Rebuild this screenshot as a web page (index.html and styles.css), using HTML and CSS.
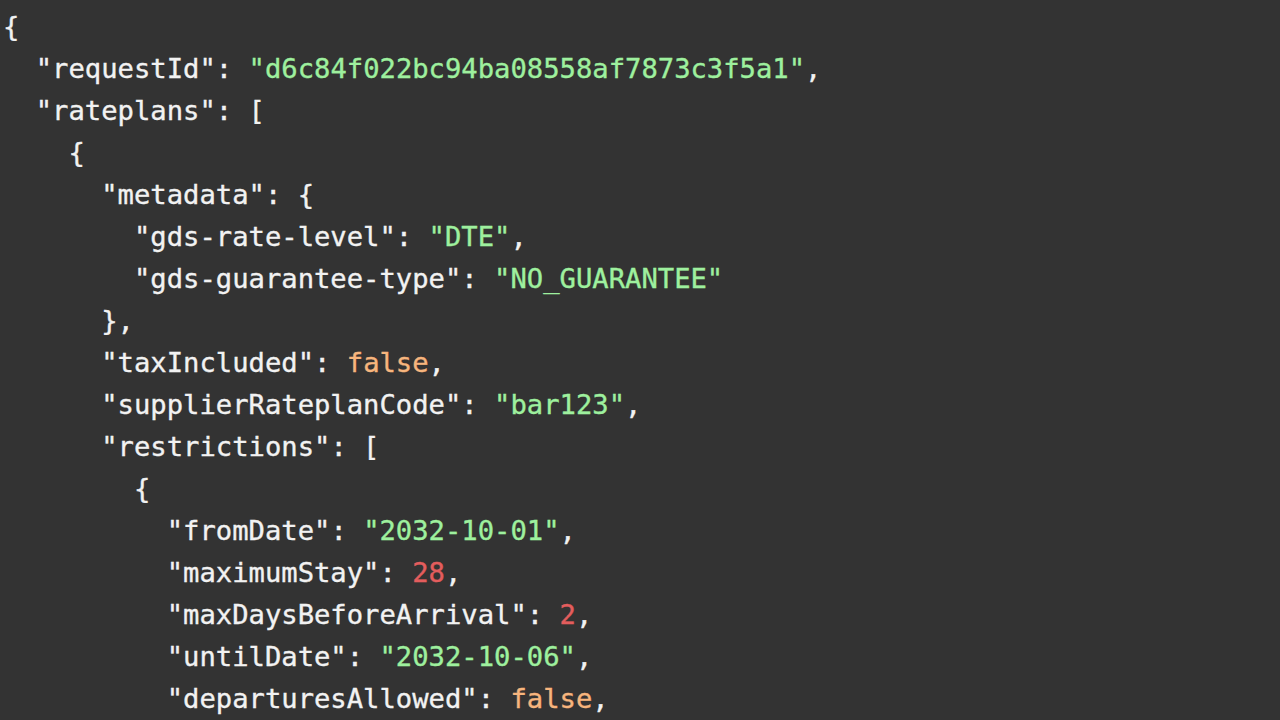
FILE: index.html
```html
<!DOCTYPE html>
<html>
<head>
<meta charset="utf-8">
<link rel="stylesheet" href="styles.css">
</head>
<body>
<pre class="code"><span class="p">{</span>
  <span class="k">"requestId"</span><span class="p">: </span><span class="s">"d6c84f022bc94ba08558af7873c3f5a1"</span><span class="p">,</span>
  <span class="k">"rateplans"</span><span class="p">: [</span>
    <span class="p">{</span>
      <span class="k">"metadata"</span><span class="p">: {</span>
        <span class="k">"gds-rate-level"</span><span class="p">: </span><span class="s">"DTE"</span><span class="p">,</span>
        <span class="k">"gds-guarantee-type"</span><span class="p">: </span><span class="s">"NO_GUARANTEE"</span>
      <span class="p">},</span>
      <span class="k">"taxIncluded"</span><span class="p">: </span><span class="b">false</span><span class="p">,</span>
      <span class="k">"supplierRateplanCode"</span><span class="p">: </span><span class="s">"bar123"</span><span class="p">,</span>
      <span class="k">"restrictions"</span><span class="p">: [</span>
        <span class="p">{</span>
          <span class="k">"fromDate"</span><span class="p">: </span><span class="s">"2032-10-01"</span><span class="p">,</span>
          <span class="k">"maximumStay"</span><span class="p">: </span><span class="n">28</span><span class="p">,</span>
          <span class="k">"maxDaysBeforeArrival"</span><span class="p">: </span><span class="n">2</span><span class="p">,</span>
          <span class="k">"untilDate"</span><span class="p">: </span><span class="s">"2032-10-06"</span><span class="p">,</span>
          <span class="k">"departuresAllowed"</span><span class="p">: </span><span class="b">false</span><span class="p">,</span></pre>
</body>
</html>
```

FILE: styles.css
```css
html, body {
  margin: 0;
  padding: 0;
  background: #333333;
  height: 100%;
  overflow: hidden;
}

.code {
  margin: 0;
  padding: 6px 0 0 3px;
  font-family: "DejaVu Sans Mono", "Liberation Mono", monospace;
  font-size: 27.2px;
  line-height: 42px;
  color: #f0f0f0;
  white-space: pre;
  -webkit-text-stroke: 0.35px currentColor;
}

.k { color: #f2f2f2; }
.p { color: #f2f2f2; }
.s { color: #9ef09e; }
.b { color: #f7b57d; }
.n { color: #e35d5d; }
```
